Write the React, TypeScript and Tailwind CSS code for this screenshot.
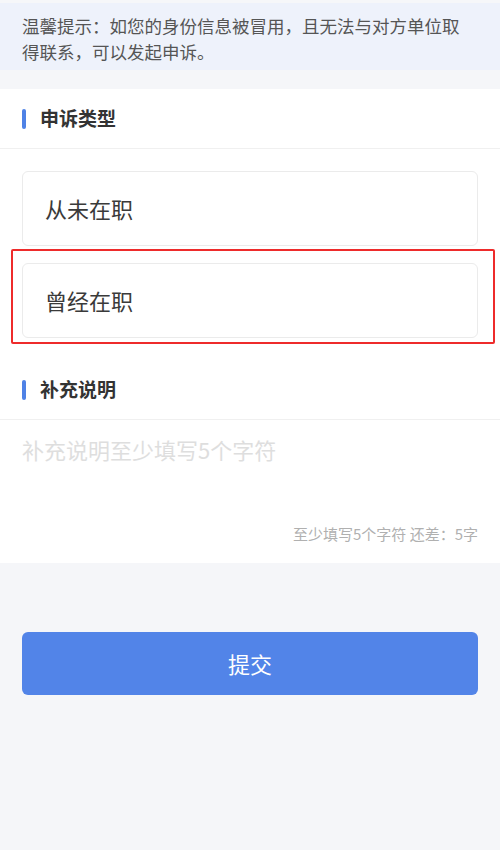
import { useState } from "react";

const OPTIONS = ["从未在职", "曾经在职"];

function SectionTitle({ title }: { title: string }) {
  return (
    <div className="flex items-center h-[60px] px-[22px] border-b border-[#f0f0f0]">
      <span className="w-[4px] h-[20px] rounded-full bg-[#4f82e6]" />
      <span className="ml-[14px] text-[19px] font-semibold text-[#333]">{title}</span>
    </div>
  );
}

export default function App() {
  const [text, setText] = useState("");
  const remain = Math.max(0, 5 - text.length);

  return (
    <div
      className="min-h-[850px] bg-[#f5f6f9]"
      style={{ fontFamily: '"Noto Sans CJK SC", "Noto Sans", sans-serif' }}
    >
      {/* 提示 */}
      <div className="h-[3px] bg-[#f6f7f9]" />
      <div className="bg-[#eef2fb] pl-[22px] pr-[30px] pt-[10px] pb-[5px] text-[17.5px] leading-[26px] text-[#555]">
        温馨提示：如您的身份信息被冒用，且无法与对方单位取得联系，可以发起申诉。
      </div>

      <div className="mt-[19px] bg-white">
        <SectionTitle title="申诉类型" />
        <div className="flex flex-col gap-[17px] px-[22px] pt-[22px] pb-[22px]">
          {OPTIONS.map((opt, i) => (
            <div key={opt} className="relative">
              <div className="flex items-center h-[75px] px-[22px] rounded-[6px] border border-[#ebebeb] text-[22px] text-[#3a3a3a]">
                {opt}
              </div>
              {i === 1 && (
                <div className="absolute -top-[14px] -left-[11px] -right-[17px] -bottom-[6px] border-2 border-[#ee2b2b] rounded-[2px] pointer-events-none" />
              )}
            </div>
          ))}
        </div>

        <SectionTitle title="补充说明" />
        <div className="px-[22px] pt-[14px] pb-[19px]">
          <textarea
            value={text}
            onChange={(e) => setText(e.target.value)}
            placeholder="补充说明至少填写5个字符"
            className="block w-full h-[86px] resize-none outline-none text-[22px] leading-[30px] text-[#333] placeholder:text-[#dedede]"
          />
          <div className="mt-[4px] text-right text-[15px] leading-[20px] text-[#b0b0b0]">
            至少填写5个字符 还差：{remain}字
          </div>
        </div>
      </div>

      <div className="px-[22px] pt-[69px]">
        <button className="w-full h-[63px] rounded-[6px] bg-[#5284e8] text-white text-[22px]">
          提交
        </button>
      </div>
    </div>
  );
}
